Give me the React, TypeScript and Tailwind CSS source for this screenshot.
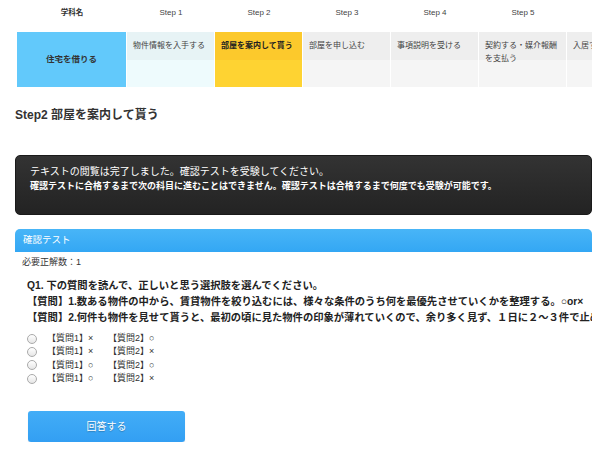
import React from "react";

const font = { fontFamily: '"Liberation Sans", "Noto Sans CJK JP", sans-serif' };

const steps = [
  { label: "Step 1", text: "物件情報を入手する", kind: "done" },
  { label: "Step 2", text: "部屋を案内して貰う", kind: "current" },
  { label: "Step 3", text: "部屋を申し込む", kind: "todo" },
  { label: "Step 4", text: "事項説明を受ける", kind: "todo" },
  { label: "Step 5", text: "契約する・媒介報酬を支払う", kind: "todo" },
  { label: "", text: "入居する", kind: "todo" },
];

const options = [
  ["×", "○"],
  ["×", "×"],
  ["○", "○"],
  ["○", "×"],
];

export default function App() {
  return (
    <div className="w-[601px] h-[454px] bg-white overflow-hidden text-[#333]" style={font}>
      <div className="w-[592px] overflow-hidden">
        {/* Step header */}
        <div className="pl-[17px] w-[700px]">
          <div className="flex h-[32px] items-start pt-[8px]">
            <div className="w-[110px] text-center text-[7.5px] leading-[10px] font-bold text-[#333]">学科名</div>
            {steps.map((s, i) => (
              <div key={i} className="w-[88px] text-center text-[8px] leading-[10px] text-[#444]">
                {s.label}
              </div>
            ))}
          </div>
          <div className="flex h-[55px]">
            <div className="w-[110px] border-r border-white bg-[#62c9fb] flex items-center justify-center text-[8.5px] font-bold text-[#333]">
              住宅を借りる
            </div>
            {steps.map((s, i) => {
              const top =
                s.kind === "done" ? "bg-[#e7f3f5]" : s.kind === "current" ? "bg-[#fcc92c]" : "bg-[#eeeeee]";
              const bottom =
                s.kind === "done" ? "bg-[#eefbfd]" : s.kind === "current" ? "bg-[#fed332]" : "bg-[#f5f5f5]";
              return (
                <div key={i} className={`w-[88px] border-r border-white flex flex-col ${bottom}`}>
                  <div className={`${top} h-[28px] shrink-0 relative`}>
                    <div
                      className={`absolute left-[6px] top-[7px] w-[76px] text-[8px] leading-[13px] ${
                        s.kind === "current" ? "font-bold text-[#222]" : "text-[#444]"
                      }`}
                    >
                      {s.text}
                    </div>
                  </div>
                  <div className="flex-1"></div>
                </div>
              );
            })}
          </div>
        </div>

        {/* Title */}
        <div className="pl-[15px] pt-[20px] text-[12px] font-bold text-[#333] leading-[16px]">
          Step2 部屋を案内して貰う
        </div>

        {/* Dark notice */}
        <div className="ml-[15px] mt-[32px] h-[60px] rounded-[5px] bg-gradient-to-b from-[#333333] to-[#232323] border border-[#1a1a1a] px-[14px] pt-[8px] text-white">
          <div className="text-[10px] leading-[15px] whitespace-nowrap">
            テキストの閲覧は完了しました。確認テストを受験してください。
          </div>
          <div className="text-[9px] font-bold leading-[15px] whitespace-nowrap">
            確認テストに合格するまで次の科目に進むことはできません。確認テストは合格するまで何度でも受験が可能です。
          </div>
        </div>

        {/* Blue bar */}
        <div className="ml-[15px] mt-[14px] h-[23px] rounded-t-[5px] bg-gradient-to-b from-[#48b5f7] to-[#33a7f4] flex items-center pl-[8px] text-[9.5px] text-white">
          確認テスト
        </div>

        <div className="pl-[22px] pt-[3px] text-[9px] leading-[14px] text-[#333]">必要正解数：1</div>

        {/* Question */}
        <div className="pl-[27px] pt-[9px] text-[10.3px] font-bold leading-[16px] text-[#222] whitespace-nowrap">
          <div>Q1. 下の質問を読んで、正しいと思う選択肢を選んでください。</div>
          <div>【質問】1.数ある物件の中から、賃貸物件を絞り込むには、様々な条件のうち何を最優先させていくかを整理する。○or×</div>
          <div>【質問】2.何件も物件を見せて貰うと、最初の頃に見た物件の印象が薄れていくので、余り多く見ず、１日に２～３件で止めるべきである。</div>
        </div>

        {/* Options */}
        <div className="pl-[27px] pt-[6px] flex flex-col">
          {options.map((o, i) => (
            <label key={i} className="flex items-center h-[13.33px] text-[9px] text-[#333]">
              <span className="w-[10px] h-[10px] rounded-full border border-[#aaa] bg-gradient-to-b from-[#fff] to-[#e6e6e6] shrink-0"></span>
              <span className="ml-[10px] w-[61px]">【質問1】{o[0]}</span>
              <span>【質問2】{o[1]}</span>
            </label>
          ))}
        </div>

        {/* Button */}
        <div className="pl-[28px] pt-[26px]">
          <button className="w-[157px] h-[31px] rounded-[3px] bg-gradient-to-b from-[#42adf7] to-[#339ff3] text-white text-[10px] shadow-[0_1px_1px_rgba(0,0,0,0.15)] [text-shadow:0_1px_1px_rgba(0,0,0,0.25)]">
            回答する
          </button>
        </div>
      </div>
    </div>
  );
}
